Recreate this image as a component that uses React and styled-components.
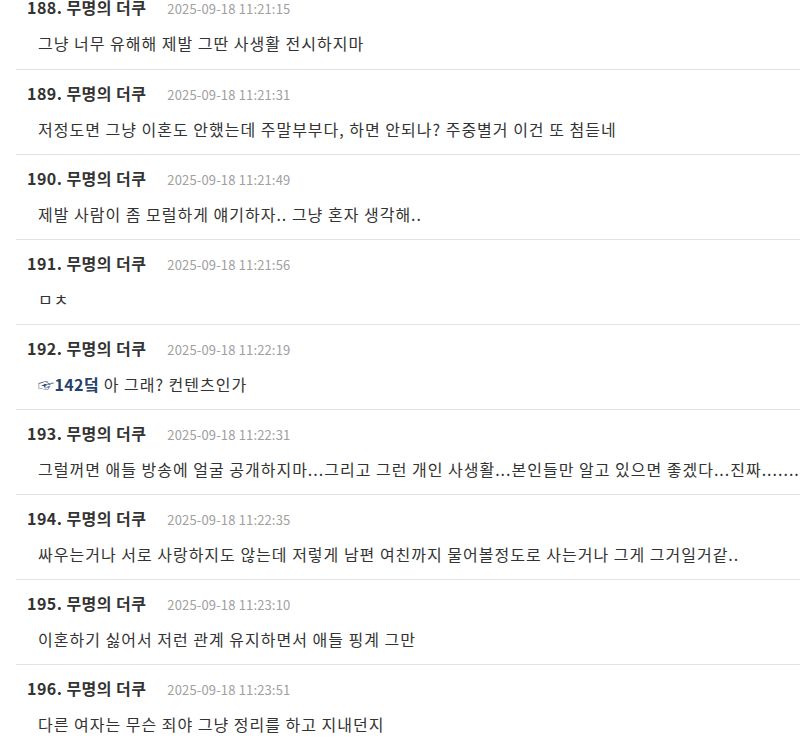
import React from 'react';
import styled, { createGlobalStyle } from 'styled-components';

const GlobalStyle = createGlobalStyle`
  html, body {
    margin: 0;
    padding: 0;
    background: #fff;
    overflow: hidden;
  }
  body {
    font-family: "Noto Sans CJK KR", "Noto Sans", sans-serif;
    color: #333;
  }
`;

const comments = [
  { no: 188, time: '2025-09-18 11:21:15', text: '그냥 너무 유해해 제발 그딴 사생활 전시하지마' },
  { no: 189, time: '2025-09-18 11:21:31', text: '저정도면 그냥 이혼도 안했는데 주말부부다, 하면 안되나? 주중별거 이건 또 첨듣네' },
  { no: 190, time: '2025-09-18 11:21:49', text: '제발 사람이 좀 모럴하게 얘기하자.. 그냥 혼자 생각해..' },
  { no: 191, time: '2025-09-18 11:21:56', text: 'ㅁㅊ' },
  { no: 192, time: '2025-09-18 11:22:19', anchor: '☞142덬', text: ' 아 그래? 컨텐츠인가' },
  { no: 193, time: '2025-09-18 11:22:31', text: '그럴꺼면 애들 방송에 얼굴 공개하지마...그리고 그런 개인 사생활...본인들만 알고 있으면 좋겠다...진짜............. 제발' },
  { no: 194, time: '2025-09-18 11:22:35', text: '싸우는거나 서로 사랑하지도 않는데 저렇게 남편 여친까지 물어볼정도로 사는거나 그게 그거일거같..' },
  { no: 195, time: '2025-09-18 11:23:10', text: '이혼하기 싫어서 저런 관계 유지하면서 애들 핑계 그만' },
  { no: 196, time: '2025-09-18 11:23:51', text: '다른 여자는 무슨 죄야 그냥 정리를 하고 지내던지' },
];

export default function App() {
  return (
    <>
      <GlobalStyle />
      <List>
        {comments.map((c, i) => (
          <Item key={c.no} first={i === 0}>
            <Header>
              <Nick>{c.no}. 무명의 더쿠</Nick>
              <Time>{c.time}</Time>
            </Header>
            <Body>
              {c.anchor && <Anchor>{c.anchor}</Anchor>}
              {c.text}
            </Body>
          </Item>
        ))}
      </List>
    </>
  );
}

const List = styled.ul`
  list-style: none;
  margin: -16px 0 0 16px;
  padding: 0;
  width: 900px;
`;

const Item = styled.li`
  height: 85px;
  box-sizing: border-box;
  border-top: ${(p) => (p.first ? 'none' : '1px solid #e2e2e2')};
  padding: 11px 0 0 11px;
`;

const Header = styled.div`
  display: flex;
  align-items: baseline;
  gap: 21px;
  height: 24px;
`;

const Nick = styled.span`
  font-size: 16px;
  font-weight: 700;
  letter-spacing: 0.45px;
  color: #333;
`;

const Time = styled.span`
  font-size: 13px;
  letter-spacing: 0.15px;
  color: #a0a0a0;
`;

const Body = styled.div`
  margin-top: 12px;
  padding-left: 11px;
  font-size: 16px;
  letter-spacing: 1px;
  color: #333;
  white-space: nowrap;
  line-height: 24px;
`;

const Anchor = styled.span`
  color: #26416b;
  font-weight: 700;
  letter-spacing: 0.4px;
`;
